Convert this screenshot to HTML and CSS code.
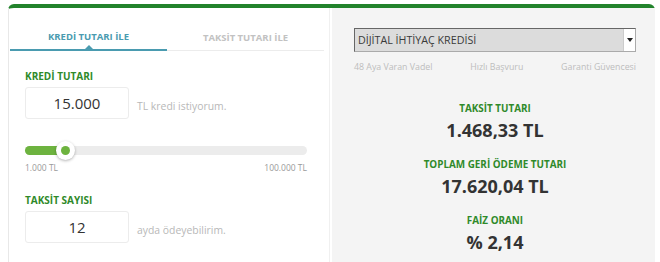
FILE: index.html
```html
<!DOCTYPE html>
<html lang="tr">
<head>
<meta charset="utf-8">
<link rel="stylesheet" href="styles.css">
</head>
<body>
<div class="calc">
  <div class="left">
    <div class="tabs">
      <div class="tab active">KREDİ TUTARI İLE</div>
      <div class="tab">TAKSİT TUTARI İLE</div>
    </div>
    <div class="form">
      <div class="label">KREDİ TUTARI</div>
      <div class="field">
        <div class="box">15.000</div>
        <span class="hint">TL kredi istiyorum.</span>
      </div>
      <div class="slider">
        <div class="track"><div class="fill" style="width:40px"></div><div class="thumb" style="left:40px"></div></div>
        <div class="ends"><span>1.000 TL</span><span>100.000 TL</span></div>
      </div>
      <div class="label second">TAKSİT SAYISI</div>
      <div class="field">
        <div class="box">12</div>
        <span class="hint">ayda ödeyebilirim.</span>
      </div>
    </div>
  </div>
  <div class="right">
    <div class="select">
      <span class="select-text">DİJİTAL İHTİYAÇ KREDİSİ</span>
      <span class="select-btn"><svg width="6" height="4" viewBox="0 0 6 4"><path d="M0 0h6L3 4z" fill="#222"/></svg></span>
    </div>
    <div class="features">
      <span>48 Aya Varan Vadel</span>
      <span>Hızlı Başvuru</span>
      <span>Garanti Güvencesi</span>
    </div>
    <div class="results">
      <div class="res">
        <div class="res-label">TAKSİT TUTARI</div>
        <div class="res-value">1.468,33 TL</div>
      </div>
      <div class="res">
        <div class="res-label">TOPLAM GERİ ÖDEME TUTARI</div>
        <div class="res-value">17.620,04 TL</div>
      </div>
      <div class="res">
        <div class="res-label">FAİZ ORANI</div>
        <div class="res-value">% 2,14</div>
      </div>
    </div>
  </div>
</div>
</body>
</html>
```
FILE: styles.css
```css
html, body { margin: 0; padding: 0; background: #fff; }
body { font-family: "Open Sans", "Noto Sans", sans-serif; height: 262px; overflow: hidden; }

.calc {
  margin: 4px 5px 0 8px;
  border-top: 4px solid #22832c;
  border-radius: 6px 6px 0 0;
  display: grid;
  grid-template-columns: 322px 1fr;
  column-gap: 2px;
  height: 258px;
}

.left {
  border-left: 1px solid #e8e8e8;
  border-right: 1px solid #f0f0f0;
  padding: 0 5px 0 1px;
}

.tabs {
  display: flex;
  height: 42px;
  border-bottom: 1px solid #ececec;
}
.tab {
  flex: 1;
  display: flex;
  align-items: flex-end;
  justify-content: center;
  padding-bottom: 6px;
  font-size: 9.5px;
  font-weight: 700;
  color: #c2c2c2;
  position: relative;
}
.tab.active {
  color: #4a9bb0;
  border-bottom: 2px solid #4a9bb0;
  margin-bottom: -1px;
}
.tab.active::after {
  content: "";
  position: absolute;
  left: 50%;
  bottom: 0;
  margin-left: -4px;
  border: 4px solid transparent;
  border-bottom-color: #4a9bb0;
  border-top: 0;
}

.form { padding: 18px 0 0 15px; }
.label {
  font-size: 10px;
  font-weight: 700;
  color: #2f8a2a;
  line-height: 14px;
}
.label.second { margin-top: 20px; }
.field {
  display: flex;
  align-items: center;
  margin-top: 4px;
}
.box {
  width: 102px;
  height: 30px;
  border: 1px solid #ececec;
  border-radius: 3px;
  display: flex;
  align-items: center;
  justify-content: center;
  font-size: 15px;
  color: #333;
}
.hint {
  margin-left: 8px;
  font-size: 10.4px;
  color: #b8b8b8;
  padding-top: 5px;
}

.slider { margin-top: 27px; width: 282px; }
.track {
  position: relative;
  height: 9px;
  border-radius: 5px;
  background: #ececec;
}
.fill {
  height: 9px;
  border-radius: 5px;
  background: #6db33f;
}
.thumb {
  position: absolute;
  top: -5px;
  width: 19px;
  height: 19px;
  margin-left: -9px;
  border-radius: 50%;
  background: #fff;
  box-shadow: 0 1px 3px rgba(0,0,0,0.3);
}
.thumb::after {
  content: "";
  position: absolute;
  left: 5px;
  top: 5px;
  width: 9px;
  height: 9px;
  border-radius: 50%;
  background: #6db33f;
}
.ends {
  display: flex;
  justify-content: space-between;
  margin-top: 7px;
  font-size: 8.5px;
  color: #9a9a9a;
}

.right {
  background: #f4f4f4;
  padding: 20px 19px 0 22px;
}
.select {
  display: flex;
  height: 22px;
  border: 1px solid #666;
  border-right-color: #aaa;
  border-bottom-color: #aaa;
  background: #dcdcdc;
}
.select-text {
  flex: 1;
  display: flex;
  align-items: center;
  padding-left: 3px;
  font-size: 10.7px;
  color: #3a3a3a;
}
.select-btn {
  width: 11px;
  background: #fff;
  border-left: 1px solid #ccc;
  display: flex;
  align-items: center;
  justify-content: center;
}
.features {
  display: flex;
  justify-content: space-between;
  margin-top: 9px;
  font-size: 8.8px;
  color: #bdbdbd;
}
.results { margin-top: 27px; text-align: center; }
.res { margin-bottom: 13px; }
.res-label {
  font-size: 9.9px;
  font-weight: 700;
  color: #2f8a2a;
  line-height: 16px;
}
.res-value {
  margin-top: 2px;
  font-size: 18px;
  font-weight: 700;
  color: #333;
  line-height: 25px;
}
```
